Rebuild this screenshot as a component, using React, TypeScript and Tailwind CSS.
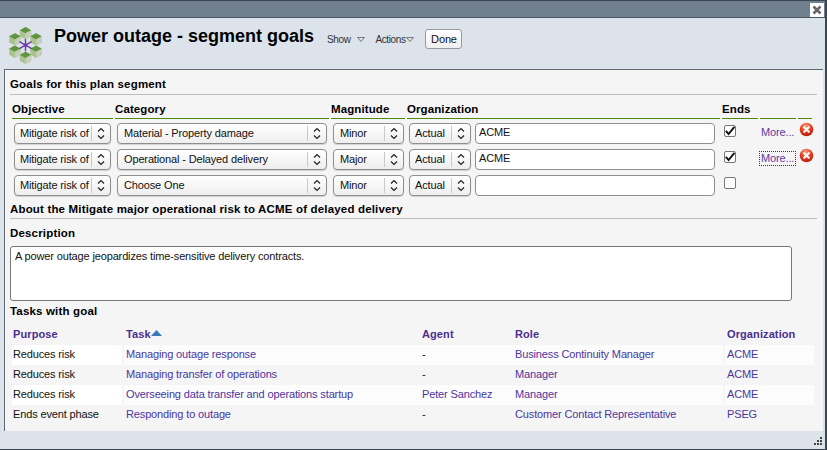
const cols = "grid grid-cols-[103px_216px_76px_315px_38px_38px_16px]";
const taskCols = "grid grid-cols-[112px_296px_93px_212px_89px]";

const goals = [
  { category: "Material - Property damage", magnitude: "Minor", org: "ACME", ends: true, more: true, focus: false },
  { category: "Operational - Delayed delivery", magnitude: "Major", org: "ACME", ends: true, more: true, focus: true },
  { category: "Choose One", magnitude: "Minor", org: "", ends: false, more: false, focus: false },
];

const tasks = [
  { purpose: "Reduces risk", task: "Managing outage response", agent: "-", agentLink: false, role: "Business Continuity Manager", org: "ACME" },
  { purpose: "Reduces risk", task: "Managing transfer of operations", agent: "-", agentLink: false, role: "Manager", org: "ACME" },
  { purpose: "Reduces risk", task: "Overseeing data transfer and operations startup", agent: "Peter Sanchez", agentLink: true, role: "Manager", org: "ACME" },
  { purpose: "Ends event phase", task: "Responding to outage", agent: "-", agentLink: false, role: "Customer Contact Representative", org: "PSEG" },
];

function Logo() {
  const cubes = [
    [21, 7], [33, 14], [33, 28], [21, 35], [9, 28], [9, 14],
  ];
  return (
    <svg width="37" height="40" viewBox="0 0 42 44" className="shrink-0 mt-[1px]">
      {cubes.map(([x, y]) => (
        <g key={`${x}-${y}`}>
          <path d={`M${x} ${y - 6.5}L${x + 6.5} ${y - 3}V${y + 4}L${x} ${y + 7.5}L${x - 6.5} ${y + 4}V${y - 3}Z`} fill="#a9c48f" />
          <path d={`M${x} ${y - 6.5}L${x + 6.5} ${y - 3}L${x} ${y + 0.5}L${x - 6.5} ${y - 3}Z`} fill="#5f9440" />
          <path d={`M${x} ${y + 0.5}L${x + 6.5} ${y - 3}V${y + 4}L${x} ${y + 7.5}Z`} fill="#c6cfbb" />
        </g>
      ))}
      <path d="M21 14V28M14 17L28 25M28 17L14 25" stroke="#6b3fa8" strokeWidth="1.6" />
      <circle cx="21" cy="21" r="2.2" fill="#6b3fa8" />
    </svg>
  );
}

function Select({ value, width, pad = "pl-[6px]" }: { value: string; width: string; pad?: string }) {
  return (
    <div className={`${width} h-[21px] flex items-center rounded-[4px] border border-[#8e8e8e] bg-gradient-to-b from-white to-[#eeeeee] shadow-[0_1px_1px_rgba(0,0,0,0.15)]`}>
      <span className={`flex-1 ${pad} whitespace-nowrap overflow-hidden text-[#111]`}>{value}</span>
      <span className="w-[19px] h-[15px] shrink-0 border-l border-[#c8c8c8] flex items-center justify-center">
        <svg width="8" height="13" viewBox="0 0 8 13">
          <path d="M1 4.5L4 1.5L7 4.5M1 8.5L4 11.5L7 8.5" fill="none" stroke="#222" strokeWidth="1.2" />
        </svg>
      </span>
    </div>
  );
}

function RemoveIcon() {
  return (
    <svg width="15" height="15" viewBox="0 0 15 15" className="ml-[1px]">
      <defs>
        <radialGradient id="red" cx="0.45" cy="0.25" r="0.85">
          <stop offset="0" stopColor="#f8a080" />
          <stop offset="0.5" stopColor="#e63a1c" />
          <stop offset="1" stopColor="#a51808" />
        </radialGradient>
      </defs>
      <circle cx="7.5" cy="7.5" r="6.8" fill="url(#red)" />
      <path d="M5.2 5.2L9.8 9.8M9.8 5.2L5.2 9.8" stroke="#fff" strokeWidth="2.2" strokeLinecap="round" />
    </svg>
  );
}

function Checkbox({ checked }: { checked: boolean }) {
  return (
    <span className="w-[12px] h-[12px] rounded-[2px] border border-[#777] bg-white flex items-center justify-center">
      {checked && (
        <svg width="12" height="12" viewBox="0 0 12 12" className="shrink-0">
          <path d="M1.8 5.8L4.6 9L10.4 1.8" fill="none" stroke="#111" strokeWidth="1.9" />
        </svg>
      )}
    </span>
  );
}

function SectionTitle({ children }: { children: React.ReactNode }) {
  return <h2 className="font-bold text-[11.5px] tracking-[0.17px] text-black leading-[14px]">{children}</h2>;
}

export default function App() {
  return (
    <div className="relative w-[827px] h-[450px] overflow-hidden bg-[#dde3eb] border-y border-[#3c4650] border-r-2 border-r-[#3c4650] text-[11px] tracking-[-0.14px] text-black font-['Liberation_Sans',Arial,sans-serif]">
      <div className="h-[17px] bg-[#70808f] border-b border-[#4a5560]" />
      <button className="absolute top-[2px] right-[1px] w-[14px] h-[14px] bg-white flex items-center justify-center">
        <svg width="10" height="10" viewBox="0 0 10 10">
          <path d="M1.5 1.5L8.5 8.5M8.5 1.5L1.5 8.5" stroke="#666" strokeWidth="2.6" />
        </svg>
      </button>

      <div className="h-[51px] flex pl-[7px] pt-[7px]">
        <Logo />
        <h1 className="ml-[10px] font-bold text-[18px] leading-[22px] tracking-normal">Power outage - segment goals</h1>
        <div className="ml-[13px] mt-[6px] flex items-center h-[16px] text-[10px] tracking-[-0.4px] text-[#333] gap-[5px]">
          <span>Show</span>
          <svg width="8" height="5" viewBox="0 0 8 5" className="ml-[2px]"><path d="M0.5 0.5H7.5L4 4.5Z" fill="#dde3eb" stroke="#777" /></svg>
        </div>
        <div className="ml-[10px] mt-[6px] flex items-center h-[16px] text-[10px] tracking-[-0.4px] text-[#333] gap-[1px]">
          <span>Actions</span>
          <svg width="8" height="5" viewBox="0 0 8 5"><path d="M0.5 0.5H7.5L4 4.5Z" fill="#dde3eb" stroke="#777" /></svg>
        </div>
        <button className="ml-[11px] mt-[4px] w-[37px] h-[20px] rounded-[3px] border border-[#999] bg-gradient-to-b from-white to-[#efefef] text-[11px] text-[#111]">Done</button>
      </div>

      <div className="ml-[4px] mr-[2px] h-[362px] bg-[#f5f5f5] border-l border-t border-[#5d6872] pl-[5px] pr-[6px] pt-[7px]">
        <SectionTitle>Goals for this plan segment</SectionTitle>
        <div className="mt-[3px] border-t border-[#bdbdbd]" />

        <div className={`${cols} mt-[7px] font-bold text-[11.5px] tracking-[0.1px] leading-[14px] ml-[2px]`}>
          {["Objective", "Category", "Magnitude", "Organization", "Ends", "", ""].map((label, i) => (
            <div key={i} className="mr-[2px] h-[17px] border-b border-[#4f8a10]">{label}</div>
          ))}
        </div>

        <div className="ml-[2px] mt-[4px] flex flex-col gap-[5px]">
          {goals.map((goal, i) => (
            <div key={i} className={`${cols} items-start h-[21px]`}>
              <div className="pl-[2px]"><Select value="Mitigate risk of" width="w-[97px]" pad="pl-[5px]" /></div>
              <div className="pl-[2px]"><Select value={goal.category} width="w-[210px]" /></div>
              <div className="pl-[2px]"><Select value={goal.magnitude} width="w-[71px]" /></div>
              <div className="pl-[2px] flex gap-[4px]">
                <Select value="Actual" width="w-[62px]" pad="pl-[5px]" />
                <div className="w-[240px] h-[21px] rounded-[4px] border border-[#8e8e8e] bg-white pl-[3px] leading-[17px] text-[#111]">{goal.org}</div>
              </div>
              <div className="pl-[2px] mt-[2px] flex"><Checkbox checked={goal.ends} /></div>
              <div className="mt-[1px]">
                {goal.more && (
                  <a className={`inline-block px-[1px] leading-[13px] text-[#5b3aa5] ${goal.focus ? "outline-1 outline-dotted outline-[#3a2a80]" : ""}`}>More...</a>
                )}
              </div>
              <div className="-mt-[1px]">{goal.more && <RemoveIcon />}</div>
            </div>
          ))}
        </div>

        <div className="mt-[6px]"><SectionTitle>About the Mitigate major operational risk to ACME of delayed delivery</SectionTitle></div>
        <div className="mt-[2px] border-t border-[#bdbdbd]" />

        <div className="mt-[7px]"><SectionTitle>Description</SectionTitle></div>
        <div className="mt-[6px] w-[782px] h-[55px] rounded-[3px] border border-[#777] bg-white px-[4px] pt-[3px] leading-[13px] text-[#111]">
          A power outage jeopardizes time-sensitive delivery contracts.
        </div>

        <div className="mt-[3px]"><SectionTitle>Tasks with goal</SectionTitle></div>

        <div className={`${taskCols} mt-[9px] h-[17px] ml-[2px] font-bold text-[#4b2e91] leading-[14px] text-[11px] tracking-[0.1px]`}>
          <div className="pl-[1px]">Purpose</div>
          <div className="pl-[2px] flex items-start">
            Task
            <svg width="11" height="6" viewBox="0 0 11 6" className="mt-[3px]"><path d="M0 6L5.5 0L11 6Z" fill="#3d78b8" /></svg>
          </div>
          <div className="pl-[2px]">Agent</div>
          <div className="pl-[2px]">Role</div>
          <div className="pl-[2px]">Organization</div>
        </div>

        <div className="ml-[2px] mt-[1px]">
          {tasks.map((t, i) => (
            <div key={i} className={`${taskCols} h-[20px] items-stretch leading-[19px] text-[#4b35a0]`}>
              <div className={`mr-[2px] pl-[1px] text-[#111] ${i % 2 === 0 ? "bg-white" : ""}`}>{t.purpose}</div>
              <div className={`pl-[2px] ${i % 2 === 0 ? "bg-white/70" : ""}`}>{t.task}</div>
              <div className={`pl-[2px] ${t.agentLink ? "" : "text-[#111]"} ${i % 2 === 0 ? "bg-white/70" : ""}`}>{t.agent}</div>
              <div className={`pl-[2px] mr-[2px] ${i % 2 === 0 ? "bg-white/70" : ""}`}>{t.role}</div>
              <div className={`pl-[2px] ${i % 2 === 0 ? "bg-white/70" : ""}`}>{t.org}</div>
            </div>
          ))}
        </div>
      </div>

      <svg width="10" height="10" viewBox="0 0 10 10" className="absolute right-[3px] bottom-[3px]">
        {[[8, 1], [5, 4], [8, 4], [2, 7], [5, 7], [8, 7]].map(([x, y]) => (
          <rect key={`${x}-${y}`} x={x} y={y} width="2" height="2" fill="#444" />
        ))}
      </svg>
    </div>
  );
}
